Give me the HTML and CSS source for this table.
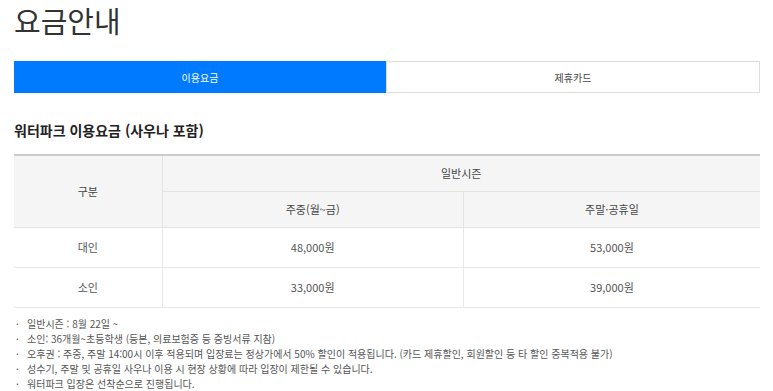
FILE: index.html
```html
<!DOCTYPE html>
<html lang="ko">
<head>
<meta charset="utf-8">
<link rel="stylesheet" href="styles.css">
</head>
<body>
<div class="page">
  <h1 class="title">요금안내</h1>
  <div class="tabs">
    <div class="tab active">이용요금</div>
    <div class="tab">제휴카드</div>
  </div>
  <h2 class="subtitle">워터파크 이용요금 (사우나 포함)</h2>
  <table class="price">
    <colgroup>
      <col class="c1"><col class="c2"><col class="c3">
    </colgroup>
    <thead>
      <tr class="h1row"><th rowspan="2">구분</th><th colspan="2">일반시즌</th></tr>
      <tr class="h2row"><th>주중(월~금)</th><th>주말·공휴일</th></tr>
    </thead>
    <tbody>
      <tr><td>대인</td><td>48,000원</td><td>53,000원</td></tr>
      <tr><td>소인</td><td>33,000원</td><td>39,000원</td></tr>
    </tbody>
  </table>
  <ul class="notes">
    <li>일반시즌 : 8월 22일 ~</li>
    <li>소인: 36개월~초등학생 (등본, 의료보험증 등 증빙서류 지참)</li>
    <li>오후권 : 주중, 주말 14:00시 이후 적용되며 입장료는 정상가에서 50% 할인이 적용됩니다. (카드 제휴할인, 회원할인 등 타 할인 중복적용 불가)</li>
    <li>성수기, 주말 및 공휴일 사우나 이용 시 현장 상황에 따라 입장이 제한될 수 있습니다.</li>
    <li>워터파크 입장은 선착순으로 진행됩니다.</li>
  </ul>
</div>
</body>
</html>
```
FILE: styles.css
```css
html, body { margin: 0; padding: 0; background: #fff; }
body { font-family: "Noto Sans CJK KR", "Noto Sans", sans-serif; color: #555; }
.page { padding: 0 13px 0 14px; }
.title { margin: 0; padding-top: 3px; font-size: 29px; font-weight: 400; color: #333; line-height: 34px; letter-spacing: 0; }
.tabs { display: flex; margin-top: 24px; border: 1px solid #ddd; height: 30px; }
.tab { flex: 1; display: flex; align-items: center; justify-content: center; font-size: 10px; color: #444; }
.tab.active { background: #007bff; color: #fff; margin: -1px 0 -1px -1px; }
.tab + .tab { border-left: 1px solid #ddd; }
.subtitle { margin: 27px 0 0; font-size: 14px; font-weight: 700; color: #222; line-height: 20px; }
.price { width: 100%; border-collapse: collapse; margin-top: 14px; border-top: 2px solid #ccc; font-size: 11px; line-height: 14px; }
.price .c1 { width: 148px; }
.price th, .price td { padding: 0; }
.price th { background: #f5f5f5; font-weight: 400; color: #444; border-bottom: 1px solid #e3e3e3; border-left: 1px solid #e3e3e3; }
.price th:first-child { border-left: none; }
.h1row { height: 36px; }
.h2row { height: 36px; }
.h2row th:first-child { border-left: 1px solid #e3e3e3; }
.price tbody tr { height: 40px; }
.price td { text-align: center; border-bottom: 1px solid #e8e8e8; border-left: 1px solid #e8e8e8; color: #555; }
.price td:first-child { border-left: none; }
.notes { list-style: none; margin: 8px 0 0; padding: 0 0 0 2px; font-size: 10px; line-height: 15px; color: #555; }
.notes li::before { content: "·"; display: inline-block; width: 10px; margin-right: 1px; }
```
